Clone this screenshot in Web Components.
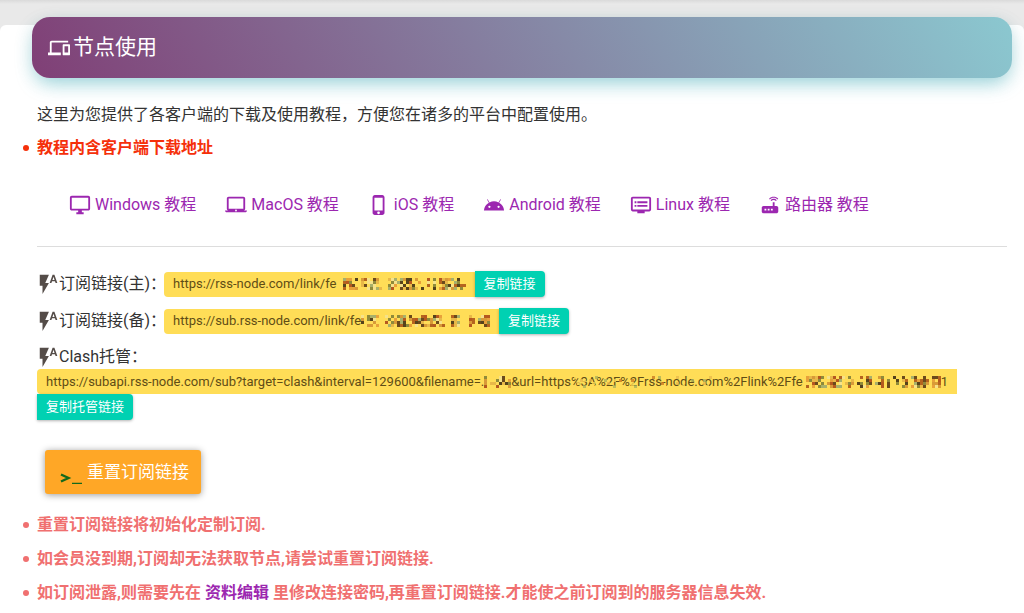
<!DOCTYPE html>
<html lang="zh-CN">
<head>
<meta charset="utf-8">
<meta name="viewport" content="width=device-width, initial-scale=1">
<title>节点使用</title>
<style>
body { margin: 0; background: #fff; color: #333; font: 16px/24px Roboto, "Noto Sans CJK SC", sans-serif; }
</style>
</head>
<body>
<node-page></node-page>
<script>
const ICONS = {
  devices: '<path d="M4 6h18V4H4c-1.100 0-2 .9-2 2v11H0v3h14v-3H4V6zm19 2h-6c-.55 0-1 .45-1 1v10c0 .55.45 1 1 1h6c.55 0 1-.45 1-1V9c0-.55-.45-1-1-1zm-1 9h-4v-7h4v7z"/>',
  desktop: '<path d="M21 2H3c-1.100 0-2 .9-2 2v12c0 1.100.9 2 2 2h7v2H8v2h8v-2h-2v-2h7c1.100 0 2-.9 2-2V4c0-1.100-.9-2-2-2zm0 14H3V4h18v12z"/>',
  laptop: '<path d="M20 18c1.100 0 2-.9 2-2V5c0-1.100-.9-2-2-2H4c-1.100 0-2 .9-2 2v11c0 1.100.9 2 2 2H0c0 1.100.9 2 2 2h20c1.100 0 2-.9 2-2h-4zM4 5h16v11H4V5zm8 14a1 1 0 1 1 0-2 1 1 0 0 1 0 2z"/>',
  phone: '<path d="M15.500 1h-8C6.120 1 5 2.120 5 3.500v17C5 21.880 6.120 23 7.500 23h8c1.380 0 2.500-1.120 2.500-2.500v-17C18 2.120 16.880 1 15.500 1zm-4 21a1.500 1.500 0 1 1 0-3 1.500 1.500 0 0 1 0 3zm4.500-4H7V4h9v14z"/>',
  android: '<path d="M17.600 9.480l1.840-3.180a.38.38 0 0 0-.66-.38l-1.880 3.240a11.500 11.500 0 0 0-9.800 0L5.220 5.920a.38.38 0 0 0-.66.38L6.400 9.480A10.800 10.800 0 0 0 1 18h22a10.800 10.800 0 0 0-5.400-8.520zM7 15.250a1.250 1.250 0 1 1 0-2.500 1.250 1.250 0 0 1 0 2.500zm10 0a1.250 1.250 0 1 1 0-2.500 1.250 1.250 0 0 1 0 2.500z"/>',
  dvr: '<path d="M21 3H3c-1.100 0-2 .9-2 2v12c0 1.100.9 2 2 2h5v2h8v-2h5c1.100 0 2-.9 2-2V5c0-1.100-.9-2-2-2zm0 14H3V5h18v12zm-2-9H8v2h11V8zm0 4H8v2h11v-2zM7 8H5v2h2V8zm0 4H5v2h2v-2z"/>',
  router: '<path d="M20.200 5.900l.8-.8C19.600 3.700 17.800 3 16 3s-3.600.7-5 2.100l.8.8C13 4.800 14.500 4.200 16 4.200s3 .6 4.200 1.700zm-.9.8c-.9-.9-2.100-1.400-3.300-1.400s-2.400.5-3.300 1.400l.8.8c.7-.7 1.600-1 2.500-1s1.800.3 2.500 1l.8-.8zM19 13h-2V9h-2v4H5c-1.100 0-2 .9-2 2v4c0 1.100.9 2 2 2h14c1.100 0 2-.9 2-2v-4c0-1.100-.9-2-2-2zM8 18H6v-2h2v2zm3.500 0h-2v-2h2v2zm3.500 0h-2v-2h2v2z"/>',
  flash: '<path d="M3 2v12h3v9l7-12H9l4-9H3zm16 0h-2l-3.200 9h1.900l.7-2h3.200l.7 2h1.900L19 2zm-2.150 5.650L18 4l1.150 3.650h-2.300z"/>'
};

class UiIcon extends HTMLElement {
  connectedCallback() {
    this.attachShadow({ mode: 'open' }).innerHTML = `
      <style>
        :host { display: inline-block; flex: none; width: var(--icon-size, 22px); height: var(--icon-size, 22px); }
        svg { display: block; width: 100%; height: 100%; fill: currentColor; }
      </style>
      <svg viewBox="0 0 24 24" aria-hidden="true">${ICONS[this.getAttribute('name')]}</svg>`;
  }
}
customElements.define('ui-icon', UiIcon);

class PageBanner extends HTMLElement {
  connectedCallback() {
    this.attachShadow({ mode: 'open' }).innerHTML = `
      <style>
        :host { display: block; }
        h1 { display: flex; align-items: center; gap: 3px; margin: 0; padding: 16px; color: #fff;
          font-size: 21px; font-weight: 400; line-height: 29px; border-radius: 18px;
          background: linear-gradient(60deg, #803f76, #8bc8d0);
          box-shadow: 0 4px 20px rgba(0, 0, 0, .08), 0 8px 20px -4px rgba(0, 172, 193, .4); }
      </style>
      <h1><ui-icon name="devices"></ui-icon><slot></slot></h1>`;
  }
}
customElements.define('page-banner', PageBanner);

class TutorialLink extends HTMLElement {
  connectedCallback() {
    this.attachShadow({ mode: 'open' }).innerHTML = `
      <style>
        :host { display: block; }
        a { display: flex; align-items: center; gap: 4px; color: #9c27b0; text-decoration: none; }
      </style>
      <a href="#"><ui-icon name="${this.getAttribute('icon')}"></ui-icon><slot></slot></a>`;
  }
}
customElements.define('tutorial-link', TutorialLink);

/* Scrambled cells that hide the private part of an address; with text inside, they are sprinkled over it. */
class PixelMask extends HTMLElement {
  connectedCallback() {
    const cols = Number(this.getAttribute('cols'));
    const over = this.hasAttribute('over');
    const rows = 4, cell = 3;
    const colors = over
      ? ['#ffdd57', '#e8b84a', '#a8b05a', '#c9741f', '#ffdd57']
      : ['#6b4a1c', '#b5641f', '#8f8a3a', '#e8a13a', '#55421c', '#a8b06a', '#f6e28a', '#b5581f', '#d89a38', '#e8b848'];
    let seed = Number(this.getAttribute('seed')) || 7;
    const next = () => (seed = (seed * 16807) % 2147483647) / 2147483647;
    next();
    let rects = '';
    for (let x = 0; x < cols; x++) {
      const gap = next() < .25;
      for (let y = 0; y < rows; y++) {
        const color = colors[Math.floor(next() * colors.length)];
        if (next() < (over ? .25 : gap ? .1 : .7)) {
          rects += `<rect x="${x * cell}" y="${y * cell}" width="${cell}" height="${cell}" fill="${color}"/>`;
        }
      }
    }
    this.attachShadow({ mode: 'open' }).innerHTML = `
      <style>
        :host { display: inline-block; flex: none; position: relative; }
        svg { display: block; }
        :host([over]) svg { position: absolute; left: 0; top: 6px; opacity: .75; }
      </style>
      <slot></slot><svg width="${cols * cell}" height="${rows * cell}" aria-hidden="true">${rects}</svg>`;
  }
}
customElements.define('pixel-mask', PixelMask);

class SubscriptionRow extends HTMLElement {
  connectedCallback() {
    this.attachShadow({ mode: 'open' }).innerHTML = `
      <style>
        :host { display: flex; flex-wrap: wrap; align-items: center; }
        .label { display: flex; align-items: center; width: 127px; white-space: nowrap; color: #333; }
        :host([stacked]) .label { width: 100%; }
        ui-icon { color: #544c48; }
        .tag { display: flex; align-items: center; height: 25px; padding: 0 9px; white-space: nowrap; overflow: hidden;
          background: #ffdd57; color: #5f4d16; font-size: 13px; border-radius: 4px 0 0 4px; }
        button { height: 26px; padding: 0 9px; border: 0; border-radius: 0 4px 4px 0; background: #00d1b2; color: #fff;
          font: inherit; font-size: 13px; line-height: 26px; box-shadow: 0 1px 3px rgba(0, 0, 0, .3); }
      </style>
      <span class="label"><ui-icon name="flash"></ui-icon><slot name="label"></slot></span>
      <span class="tag"><slot></slot></span>
      <button type="button">${this.getAttribute('action')}</button>`;
  }
}
customElements.define('subscription-row', SubscriptionRow);

class NoteList extends HTMLElement {
  connectedCallback() {
    this.setAttribute('role', 'list');
    this.attachShadow({ mode: 'open' }).innerHTML = `
      <style>
        :host { display: flex; flex-direction: column; gap: 10px; font-weight: 700; }
      </style>
      <slot></slot>`;
  }
}
customElements.define('note-list', NoteList);

class NoteItem extends HTMLElement {
  connectedCallback() {
    this.setAttribute('role', 'listitem');
    this.attachShadow({ mode: 'open' }).innerHTML = `
      <style>
        :host { display: block; }
        div { display: flex; align-items: center; gap: 8px; margin-left: -14px; }
        div::before { content: ""; flex: none; width: 6px; height: 6px; border-radius: 50%; background: currentColor; }
      </style>
      <div><span><slot></slot></span></div>`;
  }
}
customElements.define('note-item', NoteItem);

class ResetButton extends HTMLElement {
  connectedCallback() {
    this.attachShadow({ mode: 'open' }).innerHTML = `
      <style>
        :host { display: block; }
        button { display: flex; align-items: center; gap: 4px; height: 44px; padding: 0 12px 0 15px; border: 0; border-radius: 3px;
          background: #ffa726; color: #fff; font: inherit; font-size: 17px; font-weight: 400;
          box-shadow: 0 1px 7px rgba(0, 0, 0, .4); }
        svg { display: block; width: 23px; height: 24px; fill: none; stroke: #14691c; stroke-width: 2.400; }
      </style>
      <button type="button"><svg viewBox="0 0 23 24" aria-hidden="true"><path d="M1 14.500l7.500 3.500L1 21.500M12 24h10"/></svg><slot></slot></button>`;
  }
}
customElements.define('reset-button', ResetButton);

class NodePage extends HTMLElement {
  connectedCallback() {
    this.attachShadow({ mode: 'open' }).innerHTML = `
      <style>
        :host { display: block; padding-top: 25px; background: linear-gradient(#dadada, #e9e9e9 4px); }
        main { display: flow-root; background: #fff; border-radius: 6px 6px 0 0; padding: 0 12px 8px 32px; }
        page-banner { margin-top: -8px; }
        .body { padding: 25px 5px 0; }
        p { margin: 0 0 9px; }
        .hot { color: #f5300a; }
        nav { display: flex; flex-wrap: wrap; gap: 8px 29px; padding: 33px 32px 29px; }
        hr { margin: 0; border: 0; border-top: 1px solid #ddd; }
        .rows { display: flex; flex-direction: column; gap: 11px; padding: 24px 0 30px; }
        reset-button { margin: 0 8px 19px; }
        .notes { color: #f07070; }
        a { color: #9c27b0; text-decoration: none; }
      </style>
      <main>
        <page-banner>节点使用</page-banner>
        <div class="body">
          <p>这里为您提供了各客户端的下载及使用教程，方便您在诸多的平台中配置使用。</p>
          <note-list class="hot"><note-item>教程内含客户端下载地址</note-item></note-list>
          <nav>
            <tutorial-link icon="desktop">Windows 教程</tutorial-link>
            <tutorial-link icon="laptop">MacOS 教程</tutorial-link>
            <tutorial-link icon="phone">iOS 教程</tutorial-link>
            <tutorial-link icon="android">Android 教程</tutorial-link>
            <tutorial-link icon="dvr">Linux 教程</tutorial-link>
            <tutorial-link icon="router">路由器 教程</tutorial-link>
          </nav>
          <hr>
          <div class="rows">
            <subscription-row action="复制链接"><span slot="label">订阅链接(主)：</span>https://rss-node.com/link/fe<pixel-mask cols="43" seed="1187"></pixel-mask></subscription-row>
            <subscription-row action="复制链接"><span slot="label">订阅链接(备)：</span>https://sub.rss-node.com/link/fe<pixel-mask cols="43" seed="2391"></pixel-mask></subscription-row>
            <subscription-row stacked action="复制托管链接"><span slot="label">Clash托管：</span>https://subapi.rss-node.com/sub?target=clash&amp;interval=129600&amp;filename=.<pixel-mask cols="9" seed="5077"></pixel-mask>&amp;url=https<pixel-mask over cols="48" seed="911">%3A%2F%2Frss-node.com</pixel-mask>%2Flink%2Ffe<pixel-mask cols="46" seed="3133"></pixel-mask>1</subscription-row>
          </div>
          <reset-button>重置订阅链接</reset-button>
          <note-list class="notes">
            <note-item>重置订阅链接将初始化定制订阅.</note-item>
            <note-item>如会员没到期,订阅却无法获取节点,请尝试重置订阅链接.</note-item>
            <note-item>如订阅泄露,则需要先在 <a href="#">资料编辑</a> 里修改连接密码,再重置订阅链接.才能使之前订阅到的服务器信息失效.</note-item>
          </note-list>
        </div>
      </main>`;
  }
}
customElements.define('node-page', NodePage);
</script>
</body>
</html>
